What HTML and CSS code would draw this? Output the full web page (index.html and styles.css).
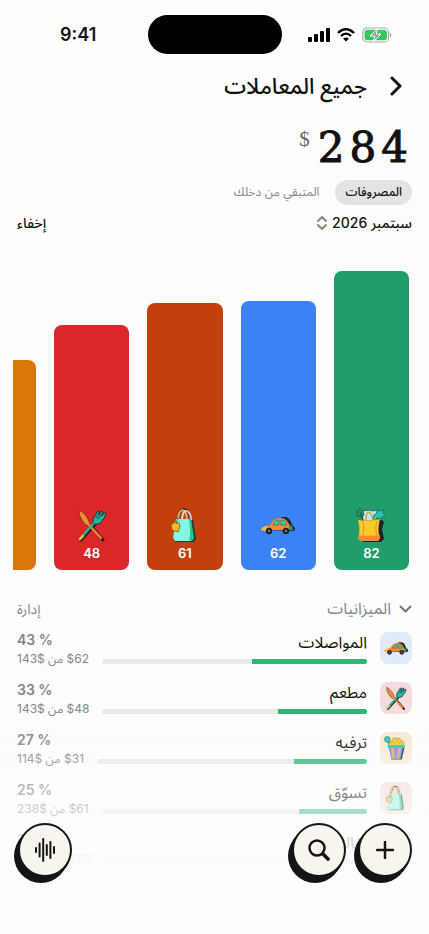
FILE: index.html
```html
<!DOCTYPE html>
<html lang="ar" dir="rtl">
<head>
  <meta charset="UTF-8" />
  <meta name="viewport" content="width=device-width, initial-scale=1" />
  <title>جميع المعاملات</title>
  <link rel="stylesheet" href="styles.css">
</head>
<body>

  <!-- Shared icons -->
  <svg class="sprite" aria-hidden="true">
    <symbol id="car" viewBox="0 0 36 36">
      <path d="M8 23c0-3 4-4 6-5 3-6 5-8 11-8 4 0 6 4 7 8 2 1 3 3 3 5l-3 1z" fill="#1f2328"/>
      <path d="M2 23c0-3 3-4 8-5 3-5 5-7 11-7 5 0 7 4 9 8 2 1 2 1 2 4H3z" fill="#f58a35"/>
      <path d="M1 23c0-2 3-4 6-4l1 4-3 1z" fill="#fbc02d"/>
      <path d="M29 18l3 1 1 4h-4z" fill="#2a9d6a"/>
      <path d="M13 18c2-3 3-5 6-5v5zm8-5c4 0 5 2 6 5h-6z" fill="#2fd0b5" stroke="#1f5f58" stroke-width=".6"/>
      <circle cx="9" cy="24" r="3.2" fill="#1f2328"/>
      <circle cx="26" cy="24" r="3.2" fill="#1f2328"/>
      <circle cx="9" cy="24" r="1.2" fill="#8a7a55"/>
      <circle cx="26" cy="24" r="1.2" fill="#8a7a55"/>
    </symbol>

    <symbol id="cutlery" viewBox="0 0 36 36">
      <g fill="none" stroke="#1f2328" stroke-linecap="round" stroke-width="3">
        <path d="M17 19l12 14"/>
        <path d="M7 33l16-18"/>
      </g>
      <path d="M5 3c6 3 9 8 11 14l-3 2C8 14 5 10 5 3z" fill="#f58a35" stroke="#1f2328" stroke-width=".6"/>
      <path d="M15 18l12 13" stroke="#f58a35" stroke-width="2.200" stroke-linecap="round"/>
      <path d="M6 32l14-16" stroke="#20b8a2" stroke-width="2.400" stroke-linecap="round"/>
      <path d="M6 32l3-3" stroke="#fbc02d" stroke-width="2.400" stroke-linecap="round"/>
      <path d="M19 12l5-8 1.500.6-.8 3.400 2.800-4 1.500 1-1.500 4 3-3.500 1.500 1-1.500 4-4.500 6-5 1-2-2z" fill="#20b8a2" stroke="#1f2328" stroke-width=".9"/>
      <path d="M22 11l3-4M24 12l3-4" stroke="#1f2328" stroke-width=".8"/>
    </symbol>

    <symbol id="bag" viewBox="0 0 36 36">
      <path d="M12 13h14l3 19-2 3H9l-3-3z" fill="#1f3c3c"/>
      <path d="M11 13c0-14 12-14 12 0" fill="none" stroke="#3a3430" stroke-width="3"/>
      <path d="M11 13c0-13 9-13 9 0" fill="none" stroke="#e7a867" stroke-width="2"/>
      <path d="M15 13c0-13 9-11 9 0" fill="none" stroke="#f7d2a4" stroke-width="2"/>
      <path d="M19 4c3 2 4 5 4 9" fill="none" stroke="#6d87d8"/>
      <path d="M9 12h15l2 20-2 2H8l-2-3z" fill="#84f5e2"/>
      <path d="M22 12h2l3 19-2 3-3-1c2-5 1-13 0-21z" fill="#25c788"/>
      <path d="M8 15l4 1 1 3-2 6-6-2-1-5z" fill="#f6b928" stroke="#5c4a20" stroke-width=".7"/>
      <path d="M9 17l2-6" stroke="#5c4a20" stroke-width=".8"/>
    </symbol>

    <symbol id="groceries" viewBox="0 0 36 36">
      <path d="M8 13h21l2 2-2 7 2 10-3 3H10z" fill="#1f2328"/>
      <path d="M10 14L9 4l7-1 4 1 4-1v11z" fill="#b9e7ea" stroke="#27515a" stroke-width=".8"/>
      <path d="M4 4l3-3 3 3 1 4-3 2-4-1z" fill="#229160" stroke="#145a3b" stroke-width=".8"/>
      <path d="M7 5l3 8" stroke="#145a3b"/>
      <path d="M20 12l1-4 3-2 1-3 3 1 3-1-1 3 2 2-3 2-1 2-4-1-2 3z" fill="#28c7b7" stroke="#15695f" stroke-width=".8"/>
      <path d="M13 15c-1-12 6-14 7 0" fill="none" stroke="#d9a441" stroke-width="1.4"/>
      <path d="M5 13c6 1 16 1 22-1-2 8-2 14 0 19l-2 3H9l-4-2c2-6 2-12 0-19z" fill="#fcc928"/>
      <path d="M5 28c6 1 14 1 22 0v3l-2 3H9l-4-2z" fill="#f58a35"/>
      <path d="M24 14c-2 7-1 12 0 14M10 14c1 5 1 9 0 14" fill="none" stroke="#c98e14" stroke-width=".8"/>
    </symbol>

    <symbol id="popcorn" viewBox="0 0 36 36">
      <path d="M8 16h22l-4 18H12z" fill="#1f2328"/>
      <path d="M10 15L6 6" stroke="#1f2328" stroke-width="3"/>
      <path d="M10 15L6 6" stroke="#20b8a2" stroke-width="2"/>
      <circle cx="6" cy="6" r="4" fill="#25c9b0" stroke="#176f64" stroke-width=".8"/>
      <path d="M8 15c-1-4 2-6 4-6 0-4 4-6 6-4 3-2 7 0 7 3 4 0 5 4 4 7z" fill="#f7c62f" stroke="#9a7510" stroke-width=".8"/>
      <path d="M8 16h20l-4 17H12z" fill="#6f93e8"/>
      <path d="M11 16h4l1 17h-3zM21 16h4l-3 17h-2z" fill="#f3a062"/>
      <path d="M6 14h24l-1 4H7z" fill="#25c9b0"/>
      <path d="M13 9l2 2m4-4l1 3m4 1l-2 1" stroke="#c78e16"/>
    </symbol>
  </svg>

  <div class="screen">

    <!-- Status bar -->
    <div class="status" dir="ltr">
      <span class="time">9:41</span>
      <span class="island"></span>
      <span class="signals">
        <svg width="22" height="14" viewBox="0 0 22 14" aria-hidden="true">
          <rect x="0" y="9" width="4" height="5" rx="1"/>
          <rect x="6" y="6" width="4" height="8" rx="1"/>
          <rect x="12" y="3" width="4" height="11" rx="1"/>
          <rect x="18" y="0" width="4" height="14" rx="1"/>
        </svg>
        <svg width="18" height="14" viewBox="0 0 18 14" aria-hidden="true">
          <path d="M1 5c5-5 11-5 16 0M4 8c3-3 7-3 10 0" fill="none" stroke="#000" stroke-width="2.400"/>
          <path d="M6 10.500c2-1.500 4-1.500 6 0L9 13.500z"/>
        </svg>
        <svg width="30" height="16" viewBox="0 0 30 16" aria-hidden="true">
          <rect x=".7" y="1" width="26" height="14" rx="4.500" fill="#fff" stroke="#aaa" stroke-width="1.200"/>
          <rect x="2.500" y="2.800" width="22.400" height="10.400" rx="3" fill="#34c759"/>
          <path d="M28 5.500c1.500.8 1.500 4.200 0 5z" fill="#999"/>
          <path d="M16 1L8 9h5l-2 6 8-8h-5z" fill="#999" stroke="#fff"/>
        </svg>
      </span>
    </div>

    <!-- Title -->
    <header class="header">
      <button class="back" aria-label="رجوع">
        <svg width="12" height="20" viewBox="0 0 12 20" aria-hidden="true">
          <path d="M2 2l8 8-8 8"/>
        </svg>
      </button>
      <h1>جميع المعاملات</h1>
    </header>

    <!-- Total -->
    <div class="total">
      <span class="total-value">284</span>
      <span class="total-currency">$</span>
    </div>

    <div class="tabs">
      <button class="tab active">المصروفات</button>
      <button class="tab">المتبقي من دخلك</button>
    </div>

    <div class="period">
      <button class="month">
        سبتمبر 2026
        <svg width="10" height="14" viewBox="0 0 10 14" aria-hidden="true">
          <path d="M1 5l4-4 4 4M1 9l4 4 4-4"/>
        </svg>
      </button>
      <button class="hide">إخفاء</button>
    </div>

    <!-- Spending chart -->
    <div class="chart">
      <div class="bar green" style="height: 299px">
        <svg class="bar-icon"><use href="#groceries"/></svg>
        <span>82</span>
      </div>
      <div class="bar blue" style="height: 269px">
        <svg class="bar-icon"><use href="#car"/></svg>
        <span>62</span>
      </div>
      <div class="bar rust" style="height: 267px">
        <svg class="bar-icon"><use href="#bag"/></svg>
        <span>61</span>
      </div>
      <div class="bar red" style="height: 245px">
        <svg class="bar-icon"><use href="#cutlery"/></svg>
        <span>48</span>
      </div>
      <div class="bar amber" style="height: 210px"></div>
    </div>

    <!-- Budgets -->
    <section class="budgets">
      <div class="budgets-head">
        <button class="toggle">
          <svg width="13" height="8" viewBox="0 0 13 8" aria-hidden="true">
            <path d="M1.500 1.500l5 5 5-5"/>
          </svg>
          الميزانيات
        </button>
        <button class="manage">إدارة</button>
      </div>

      <ul class="list">
        <li class="row">
          <span class="tile tile-blue"><svg><use href="#car"/></svg></span>
          <div class="progress">
            <span class="name">المواصلات</span>
            <div class="track"><div class="fill" style="width: 43.4%"></div></div>
          </div>
          <div class="figures">
            <span class="percent" dir="ltr">43 %</span>
            <span class="spent">$62 من $143</span>
          </div>
        </li>
        <li class="row">
          <span class="tile tile-red"><svg><use href="#cutlery"/></svg></span>
          <div class="progress">
            <span class="name">مطعم</span>
            <div class="track"><div class="fill" style="width: 33.6%"></div></div>
          </div>
          <div class="figures">
            <span class="percent" dir="ltr">33 %</span>
            <span class="spent">$48 من $143</span>
          </div>
        </li>
        <li class="row">
          <span class="tile tile-amber"><svg><use href="#popcorn"/></svg></span>
          <div class="progress">
            <span class="name">ترفيه</span>
            <div class="track"><div class="fill" style="width: 27.2%"></div></div>
          </div>
          <div class="figures">
            <span class="percent" dir="ltr">27 %</span>
            <span class="spent">$31 من $114</span>
          </div>
        </li>
        <li class="row">
          <span class="tile tile-rust"><svg><use href="#bag"/></svg></span>
          <div class="progress">
            <span class="name">تسوّق</span>
            <div class="track"><div class="fill" style="width: 25.6%"></div></div>
          </div>
          <div class="figures">
            <span class="percent" dir="ltr">25 %</span>
            <span class="spent">$61 من $238</span>
          </div>
        </li>
        <li class="row">
          <span class="tile tile-green"><svg><use href="#groceries"/></svg></span>
          <div class="progress">
            <span class="name">بقالة</span>
            <div class="track"><div class="fill" style="width: 21%"></div></div>
          </div>
          <div class="figures">
            <span class="percent" dir="ltr">21 %</span>
            <span class="spent">$82 من $390</span>
          </div>
        </li>
      </ul>
    </section>

  </div>

  <!-- Floating actions -->
  <nav class="actions">
    <button class="round" aria-label="إضافة">
      <svg width="18" height="18" viewBox="0 0 18 18" aria-hidden="true">
        <path d="M9 1v16M1 9h16"/>
      </svg>
    </button>
    <button class="round" aria-label="بحث">
      <svg width="22" height="22" viewBox="0 0 22 22" aria-hidden="true">
        <circle cx="9" cy="9" r="7.500"/>
        <path d="M15 15l5 5" stroke-width="3.600"/>
      </svg>
    </button>
    <button class="round voice" aria-label="إدخال صوتي">
      <svg width="22" height="24" viewBox="0 0 22 24" aria-hidden="true">
        <path d="M2 10v4M5.600 5.500v13M9.200 1v22M12.800 7v10M16.400 4v16M20 9v6" stroke-width="2"/>
      </svg>
    </button>
  </nav>

</body>
</html>
```

FILE: styles.css
```css
/* Reset */
* {
  margin: 0;
  padding: 0;
  box-sizing: border-box;
}
body {
  font-family: Inter, "Noto Sans Arabic", "DejaVu Sans", sans-serif;
  background-color: #fdfdfc;
  color: #111;
}
button {
  font: inherit;
  color: inherit;
  background: none;
  border: none;
  cursor: pointer;
}
svg {
  display: block;
  flex-shrink: 0;
}
.sprite {
  position: absolute;
  width: 0;
  height: 0;
}
.screen {
  height: 100vh;
  overflow: hidden;
}

/* --- Status bar --- */
.status {
  display: grid;
  grid-template-columns: 1fr 134px 1fr;
  align-items: center;
  padding-top: 15px;
}
.time {
  font-size: 18px;
  font-weight: 600;
  text-align: center;
  padding-left: 9px;
}
.island {
  height: 39px;
  border-radius: 20px;
  background: #000;
}
.signals {
  display: flex;
  align-items: center;
  justify-content: center;
  gap: 7px;
  padding-right: 11px;
}

/* --- Title --- */
.header {
  display: flex;
  align-items: center;
  gap: 23px;
  height: 64px;
  padding: 0 27px;
}
h1 {
  font-size: 22px;
  font-weight: 500;
  line-height: 28px;
}
.back path {
  fill: none;
  stroke: #111;
  stroke-width: 3;
  stroke-linecap: round;
  stroke-linejoin: round;
}

/* --- Total --- */
.total {
  display: flex;
  gap: 8px;
  height: 62px;
  padding: 6px 16px 0;
  font-family: "DejaVu Serif", serif;
}
.total-value {
  font-size: 42px;
  line-height: 48px;
  letter-spacing: 5px;
  direction: ltr;
  -webkit-text-stroke: 1px #111;
}
.total-currency {
  font-family: "Liberation Serif", serif;
  font-size: 21px;
  line-height: 30px;
  color: #666;
}

.tabs {
  display: flex;
  gap: 6px;
  padding: 0 17px;
}
.tab {
  height: 25px;
  padding: 0 10px;
  border-radius: 13px;
  font-size: 12px;
  color: #85858a;
  white-space: nowrap;
}
.tab.active {
  background: #e3e3e3;
  color: #111;
  font-weight: 500;
}

.period {
  display: flex;
  justify-content: space-between;
  align-items: center;
  height: 36px;
  padding: 0 17px;
  font-size: 14px;
  font-weight: 500;
}
.month {
  display: flex;
  align-items: center;
  gap: 5px;
}
.month path {
  fill: none;
  stroke: #8a8a8e;
  stroke-width: 2;
  stroke-linecap: round;
  stroke-linejoin: round;
}

/* --- Chart --- */
.chart {
  display: flex;
  align-items: flex-end;
  gap: 18px;
  height: 329px;
  margin: 0 20px 0 13px;
  overflow: hidden;
}
.bar {
  flex: 0 0 19%;
  display: flex;
  flex-direction: column;
  align-items: center;
  justify-content: flex-end;
  gap: 1px;
  padding-bottom: 8px;
  border-radius: 8px;
  color: #fff;
  font-size: 13px;
  font-weight: 600;
  line-height: 18px;
}
.bar-icon {
  width: 36px;
  height: 36px;
}
.green { background: #219d69; }
.blue { background: #3b82f4; }
.rust { background: #c2400c; }
.red { background: #db2727; }
.amber { background: #d97708; }

/* --- Budgets --- */
.budgets {
  padding: 26px 17px 0;
}
.budgets-head {
  display: flex;
  justify-content: space-between;
  align-items: center;
  height: 26px;
  color: #85858a;
  font-size: 14px;
}
.toggle {
  display: flex;
  align-items: center;
  gap: 8px;
  font-size: 16px;
}
.toggle path {
  fill: none;
  stroke: #77777b;
  stroke-width: 2;
  stroke-linecap: round;
  stroke-linejoin: round;
}
.list {
  list-style: none;
  padding-top: 6px;
}
.row {
  display: flex;
  gap: 13px;
  height: 50px;
  padding-top: 4px;
}
.tile {
  display: flex;
  align-items: center;
  justify-content: center;
  width: 32px;
  height: 32px;
  border-radius: 8px;
}
.tile svg {
  width: 26px;
  height: 26px;
}
.tile-blue { background: #e0e9fd; }
.tile-red { background: #f6dbdc; }
.tile-amber { background: #f8e8d5; }
.tile-rust { background: #f4ddd8; }
.tile-green { background: #dcefe6; }

.progress {
  flex: 1;
}
.name {
  display: block;
  margin-bottom: 7px;
  font-size: 16px;
  line-height: 20px;
}
.track {
  height: 5px;
  border-radius: 3px;
  background: #e8e8e8;
  overflow: hidden;
}
.fill {
  height: 100%;
  background: #2fb574;
}
.figures {
  display: flex;
  flex-direction: column;
  color: #85858a;
  text-align: left;
  white-space: nowrap;
}
.percent {
  font-size: 14px;
  font-weight: 600;
  line-height: 16px;
}
.spent {
  font-size: 12px;
  line-height: 22px;
}

/* --- Floating actions --- */
.actions {
  position: fixed;
  inset: auto 0 0 0;
  display: flex;
  align-items: flex-start;
  gap: 12px;
  height: 209px;
  padding: 98px 17px 0 18px;
  background: linear-gradient(to bottom, rgba(253, 253, 252, 0), #fdfdfc 70%);
}
.round {
  display: flex;
  align-items: center;
  justify-content: center;
  width: 54px;
  height: 54px;
  border: 2px solid #151515;
  border-radius: 50%;
  background: #f8f4ee;
  box-shadow: -1px 2px 0 #151515, -3px 4px 0 #151515, -4px 6px 0 #151515;
}
.voice {
  margin-right: auto;
}
.round svg {
  fill: none;
  stroke: #151515;
  stroke-width: 2.5;
  stroke-linecap: round;
}
```
